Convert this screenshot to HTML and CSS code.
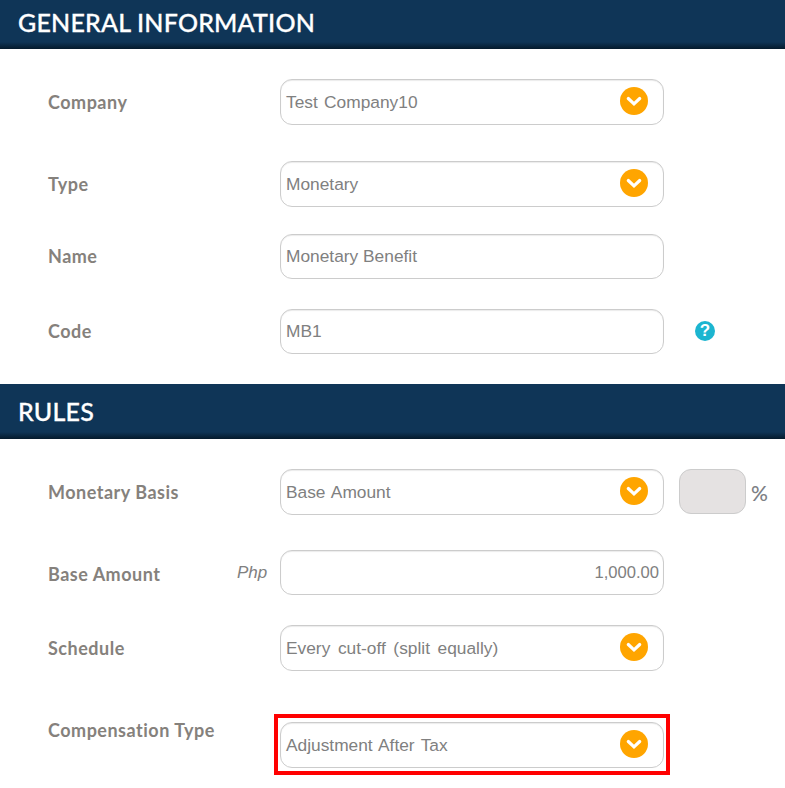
FILE: index.html
```html
<!DOCTYPE html>
<html>
<head>
    <title>Benefit Setup</title>
    <link rel="stylesheet" href="styles.css">
</head>
<body>
    <div class="section-head first">GENERAL INFORMATION</div>
    <div class="section-body general">
        <div class="row row-company">
            <div class="label">Company</div>
            <div class="field select">Test Company10 <span class="arrow"><svg viewBox="0 0 28 28"><path d="M8.3 11.5 14 16.8l5.7-5.3"/></svg></span></div>
        </div>
        <div class="row row-type">
            <div class="label">Type</div>
            <div class="field select">Monetary <span class="arrow"><svg viewBox="0 0 28 28"><path d="M8.3 11.5 14 16.8l5.7-5.3"/></svg></span></div>
        </div>
        <div class="row row-name">
            <div class="label">Name</div>
            <div class="field">Monetary Benefit</div>
        </div>
        <div class="row row-code">
            <div class="label">Code</div>
            <div class="field">MB1</div>
            <span class="help">?</span>
        </div>
    </div>

    <div class="section-head">RULES</div>
    <div class="section-body rules">
        <div class="row row-basis">
            <div class="label">Monetary Basis</div>
            <div class="field select">Base Amount <span class="arrow"><svg viewBox="0 0 28 28"><path d="M8.3 11.5 14 16.8l5.7-5.3"/></svg></span></div>
            <div class="percent-box"></div>
            <span class="percent">%</span>
        </div>
        <div class="row row-amount">
            <div class="label">Base Amount</div>
            <span class="currency">Php</span>
            <div class="field amount">1,000.00</div>
        </div>
        <div class="row row-schedule">
            <div class="label">Schedule</div>
            <div class="field select">Every cut-off (split equally) <span class="arrow"><svg viewBox="0 0 28 28"><path d="M8.3 11.5 14 16.8l5.7-5.3"/></svg></span></div>
        </div>
        <div class="row row-comp">
            <div class="label">Compensation Type</div>
            <div class="field select marked">Adjustment After Tax <span class="arrow"><svg viewBox="0 0 28 28"><path d="M8.3 11.5 14 16.8l5.7-5.3"/></svg></span></div>
        </div>
    </div>
</body>
</html>
```

FILE: styles.css
```css
html, body {
    margin: 0;
    padding: 0;
    background: #fff;
}
body {
    font-family: "Liberation Sans", Arial, sans-serif;
    font-size: 17.33px;
    word-spacing: 1.5px;
    color: #808080;
    height: 788px;
    overflow: hidden;
}
.section-head {
    height: 55px;
    padding: 8px 0 0 18px;
    box-sizing: border-box;
    background: linear-gradient(to bottom, #0f3557 0, #0f3557 48px, #051a2c 55px);
    color: #fff;
    font-family: Lato, sans-serif;
    font-size: 25px;
    font-weight: 500;
    letter-spacing: 0.2px;
    word-spacing: 0;
    line-height: 38px;
    -webkit-text-stroke: 0.3px #fff;
}
.section-head.first {
    height: 49px;
    padding-top: 3px;
    background: linear-gradient(to bottom, #0f3557 0, #0f3557 42px, #051a2c 49px);
}
.section-body.general {
    height: 335px;
    padding-top: 30px;
    box-sizing: border-box;
}
.section-body.rules {
    padding-top: 30px;
}
.row {
    display: flex;
    align-items: center;
    padding-left: 48px;
}
.row-type { margin-top: 36px; }
.row-name { margin-top: 27px; word-spacing: 0; }
.row-code { margin-top: 30px; }
.row-amount { margin-top: 35px; }
.row-schedule { margin-top: 30px; word-spacing: 2.8px; }
.row-comp { margin-top: 51px; align-items: flex-start; }
.label {
    width: 232px;
    flex-shrink: 0;
    font-family: Lato, sans-serif;
    font-size: 18px;
    font-weight: 700;
    letter-spacing: 0.5px;
    word-spacing: 0;
    color: #85817c;
}
.row-name .label,
.row-code .label {
    margin-top: -2px;
}
.row-amount .label {
    width: 189px;
    margin-top: 2px;
}
.row-comp .label {
    margin-top: -3px;
}
.currency {
    width: 43px;
    flex-shrink: 0;
    font-size: 17px;
    font-style: italic;
}
.field {
    position: relative;
    display: flex;
    align-items: center;
    width: 384px;
    height: 46px;
    box-sizing: border-box;
    padding: 1px 5px 0;
    border: 1px solid #ccc;
    border-radius: 12px;
    box-shadow: inset 0 1px 1px rgba(0, 0, 0, 0.08);
    background: #fff;
}
.row-name .field,
.row-code .field,
.row-amount .field {
    height: 45px;
}
.row-name .field,
.row-code .field {
    padding-top: 0;
}
.amount {
    justify-content: flex-end;
    padding-right: 4px;
    font-size: 16.6px;
}
.arrow {
    position: absolute;
    top: 7px;
    right: 15px;
    width: 28px;
    height: 28px;
    border-radius: 50%;
    background: #ffa500;
}
.arrow svg {
    display: block;
    width: 28px;
    height: 28px;
}
.arrow path {
    fill: none;
    stroke: #fff;
    stroke-width: 3.2px;
    stroke-linecap: round;
}
.help {
    width: 20px;
    height: 20px;
    margin-top: -1px;
    margin-left: 31px;
    border-radius: 50%;
    background: #1cb5d0;
    color: #fff;
    font-size: 17px;
    font-weight: bold;
    line-height: 20px;
    text-align: center;
}
.percent-box {
    align-self: flex-start;
    width: 67px;
    height: 45px;
    margin-left: 15px;
    box-sizing: border-box;
    border: 1px solid #ccc;
    border-radius: 12px;
    background: #e5e2e2;
}
.percent {
    margin-left: 5px;
    font-family: Lato, sans-serif;
    font-size: 21px;
    font-weight: 500;
    color: #7d7f85;
}
/* red annotation box around the field */
.marked::after {
    content: "";
    position: absolute;
    top: -9px;
    left: -7px;
    right: -7px;
    bottom: -8px;
    border: 4px solid #f00;
}
```
